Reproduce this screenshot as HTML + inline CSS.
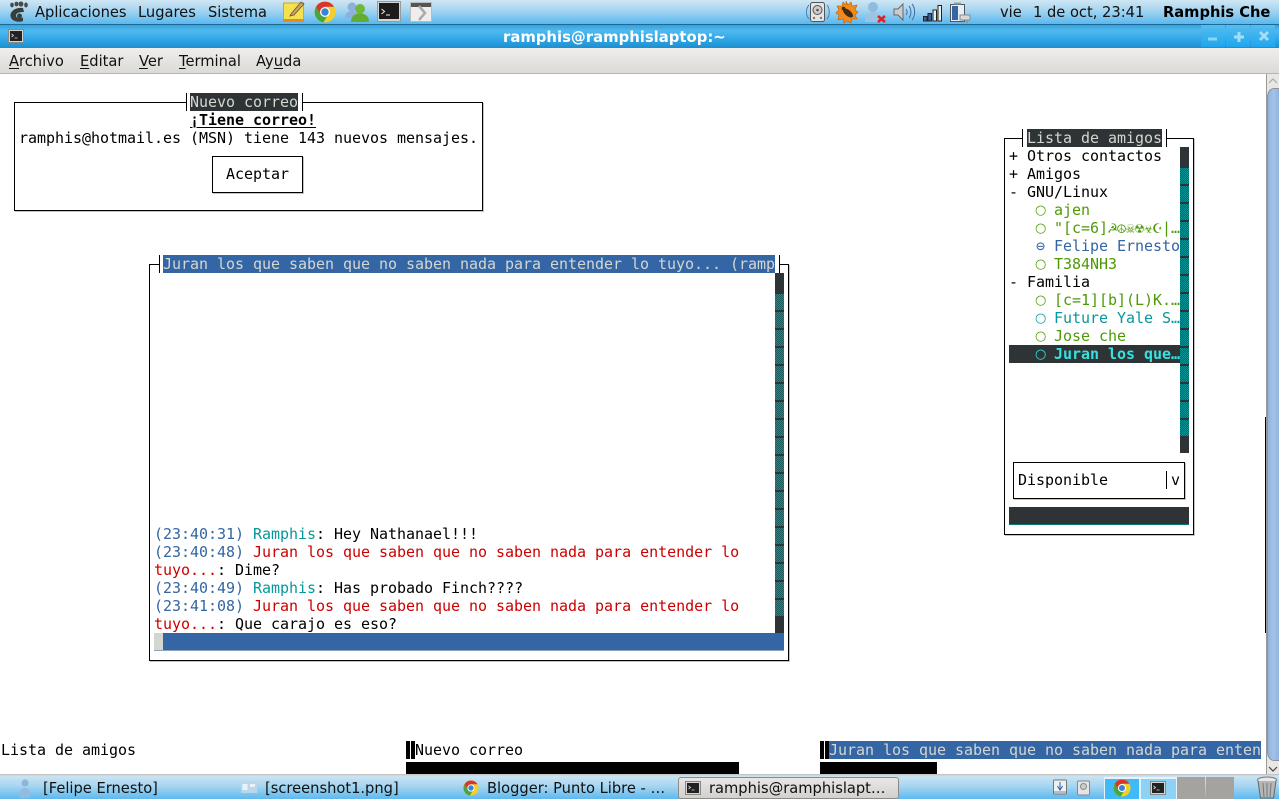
<!DOCTYPE html>
<html><head><meta charset="utf-8"><style>
html,body{margin:0;padding:0;width:1279px;height:799px;overflow:hidden;background:#fff}
div,span.a,svg.a{position:absolute}
.t{position:absolute;font-family:"DejaVu Sans Mono","Liberation Mono",monospace;font-size:15px;letter-spacing:-.03px;line-height:18px;height:18px;white-space:pre;color:#000}
.s{position:absolute;font-family:"DejaVu Sans","Liberation Sans",sans-serif;font-size:14.67px;line-height:18px;white-space:pre;color:#111}
.b{border:1px solid #000;box-sizing:border-box;box-shadow:1px 1px 0 #c4c4c4}
.o{display:inline-block;width:9px;font-family:"DejaVu Sans",sans-serif;font-size:13px;line-height:18px;margin-left:-1px;margin-right:1px;font-weight:normal;position:relative;top:-1px}
u{text-decoration-thickness:1px;text-underline-offset:2px}
.dk{background:#2e3436}
.bl{background:#3465a4}
.g{color:#4e9a06}.c{color:#06989a}.r{color:#cc0000}.n{color:#3465a4}
</style></head><body>

<!-- top panel -->
<div style="left:0;top:0;width:1279px;height:24px;background:linear-gradient(180deg,#cfe6f3 0,#a9d6f0 40%,#5ab8ef 100%)"></div>
<div style="left:0;top:24px;width:1279px;height:1px;background:#1c6a98"></div>
<svg class="a" style="left:8px;top:1px" width="20" height="22" viewBox="0 0 20 22"><g fill="#4a4a48"><ellipse cx="4" cy="4" rx="1.8" ry="2.4"/><ellipse cx="8.5" cy="3" rx="2" ry="2.4"/><ellipse cx="13" cy="3" rx="2.4" ry="2.6"/><ellipse cx="18" cy="4" rx="1.8" ry="2.5"/></g><path d="M15 7C8 6 2 10 2.500 15 3 20 10 22 15 20L15 16.500C11 18 8 17 8 14.500 8 11.500 12 11 16 11Z" fill="#3c3c3a"/><circle cx="11.500" cy="15" r="2.500" fill="#3c3c3a"/></svg>
<span class="s" style="left:35px;top:4px">Aplicaciones</span>
<span class="s" style="left:138px;top:4px">Lugares</span>
<span class="s" style="left:208px;top:4px">Sistema</span>
<!-- note -->
<svg class="a" style="left:283px;top:1px" width="23" height="22" viewBox="0 0 23 22"><rect x=".5" y="2" width="20" height="17" fill="#f5e04d" stroke="#d9a520"/><rect x="0" y="18" width="21" height="3" fill="#e98b1c"/><path d="M8 13L18 1l3 2-10 11-4 1z" fill="#c8a268" stroke="#6d5230" stroke-width=".8"/></svg>
<!-- chrome -->
<svg class="a" style="left:314px;top:1px" width="22" height="22" viewBox="0 0 22 22"><circle cx="11" cy="11" r="10.500" fill="#f3cf2c"/><path d="M2 5.800A10.500 10.500 0 0 1 20.100 5.800H11L6.800 13.500Z" fill="#d9352d"/><path d="M2 5.800A10.500 10.500 0 0 0 9.500 21.400L14 13.600 6.800 13.500Z" fill="#4aa63c"/><circle cx="11" cy="11" r="5" fill="#fff"/><circle cx="11" cy="11" r="3.700" fill="#3c82d8"/></svg>
<!-- users -->
<svg class="a" style="left:345px;top:1px" width="25" height="22" viewBox="0 0 25 22"><circle cx="7" cy="6" r="4.500" fill="#8fb0d8"/><path d="M0 17c0-5 3-7 7-7s6 3 6 7z" fill="#8fb0d8"/><circle cx="15" cy="8" r="5" fill="#6fb83a"/><path d="M6 21c0-6 4-8.500 9-8.500s9 2.500 9 8.500z" fill="#62ad2f"/></svg>
<!-- terminal -->
<svg class="a" style="left:377px;top:1px" width="25" height="22" viewBox="0 0 25 22"><rect x=".5" y=".5" width="23" height="20" fill="#d5d5d3" stroke="#999"/><rect x="2" y="2" width="20" height="16" fill="#1c1c1c"/><path d="M4.500 8l3 2.500-3 2.500M9 14h4" stroke="#eee" fill="none"/></svg>
<!-- arrow box -->
<svg class="a" style="left:410px;top:2px" width="23" height="21" viewBox="0 0 23 21"><rect x=".5" y=".5" width="21" height="19" fill="#eee" stroke="#bbb"/><rect x="1" y="1" width="20" height="4" fill="#555"/><path d="M9 4l6 7-6 7" stroke="#aaa" stroke-width="2.500" fill="none"/></svg>
<!-- tray -->
<svg class="a" style="left:806px;top:1px" width="24" height="22" viewBox="0 0 24 22"><rect x="4.500" y="1.500" width="14" height="19" rx="2" fill="#e4e4e2" stroke="#555"/><circle cx="11.500" cy="9" r="4.500" fill="#ccc" stroke="#555"/><circle cx="11.500" cy="9" r="1.300" fill="#555"/><circle cx="8" cy="17" r="1.200" fill="#777"/><circle cx="15" cy="17" r="1.200" fill="#777"/><path d="M3 4C-.5 8-.5 14 3 18M21 4c3 4 3 10 0 14" stroke="#4a7fb8" fill="none"/></svg>
<svg class="a" style="left:835px;top:0" width="24" height="24" viewBox="0 0 24 24"><path d="M11 1l2 4 3-3 1 4 5-1-2 5 3 2-3 3 2 4-5 0-1 4-4-2-3 2-1-4-5 1 1-5-3-2 3-3-2-4 5 0 1-4 3 3z" fill="#f08a1c" stroke="#b8620e" stroke-width=".6"/><ellipse cx="13" cy="13" rx="6" ry="3" transform="rotate(40 13 13)" fill="#3f2c16"/><circle cx="8.500" cy="8.500" r="1.800" fill="#3f2c16"/></svg>
<svg class="a" style="left:864px;top:1px" width="24" height="23" viewBox="0 0 24 23"><circle cx="9" cy="6" r="5" fill="#8fbbe0"/><path d="M1 21c0-7 3-10 8-10s8 3 8 10z" fill="#9cc3e4"/><path d="M14 15l7 6M21 15l-7 6" stroke="#dd2222" stroke-width="2.500"/></svg>
<svg class="a" style="left:893px;top:2px" width="23" height="20" viewBox="0 0 23 20"><path d="M1 7h4l5-5v16l-5-5H1z" fill="#ccc" stroke="#666"/><path d="M13 7c1.500 2 1.500 4 0 6M16 4c2.500 3 2.500 9 0 12M19 2c3.500 4 3.500 12 0 16" stroke="#3d6fa8" fill="none"/></svg>
<svg class="a" style="left:923px;top:4px" width="20" height="18" viewBox="0 0 20 18"><rect x=".5" y="12.500" width="3.500" height="4.500" fill="#3465a4" stroke="#222"/><rect x="5" y="9.500" width="3.500" height="7.500" fill="#3465a4" stroke="#222"/><rect x="10" y="6" width="3.500" height="11" fill="#eee" stroke="#222"/><rect x="15" y="1.500" width="3.500" height="15.500" fill="#eee" stroke="#222"/></svg>
<svg class="a" style="left:949px;top:1px" width="23" height="23" viewBox="0 0 23 23"><rect x="1.500" y="3.500" width="14" height="17" fill="#e8eef6" stroke="#555"/><rect x="3" y="5" width="6" height="14" fill="#3465a4"/><rect x="5" y="1.500" width="7" height="2" fill="#999"/><path d="M11 14h10v5H11z M14 19v3M18 19v3" fill="#d8d8d6" stroke="#888"/></svg>
<span class="s" style="left:1000px;top:4px">vie</span>
<span class="s" style="left:1033px;top:4px">1 de oct, 23:41</span>
<span class="s" style="left:1163px;top:4px;font-weight:bold;color:#000">Ramphis Che</span>

<!-- titlebar -->
<div style="left:0;top:25px;width:1279px;height:23px;background:linear-gradient(180deg,#3a9fd8 0,#4fbaf0 25%,#2fa4e4 65%,#1b8fcf 100%)"></div>
<svg class="a" style="left:8px;top:29px" width="16" height="14" viewBox="0 0 16 14"><rect x=".5" y=".5" width="15" height="13" fill="#d5d5d3" stroke="#888"/><rect x="2" y="2" width="12" height="10" fill="#222"/><path d="M3.500 5l2 1.500-2 1.500M6.500 9h3" stroke="#ddd" fill="none" stroke-width=".8"/></svg>
<span class="s" style="left:503px;top:28px;font-weight:bold;color:#fff;font-size:14.85px">ramphis@ramphislaptop:~</span>
<div style="left:1201px;top:25px;width:24px;height:22px;background:linear-gradient(180deg,#55bdf0,#1ea6ee)"></div>
<div style="left:1226px;top:25px;width:24px;height:22px;background:linear-gradient(180deg,#55bdf0,#1ea6ee)"></div>
<div style="left:1251px;top:25px;width:24px;height:22px;background:linear-gradient(180deg,#55bdf0,#1ea6ee)"></div>
<svg class="a" style="left:1201px;top:25px" width="75" height="22" viewBox="0 0 75 22"><path d="M7 14h9" stroke="#8fd3f5" stroke-width="3"/><path d="M33 12h10M38 7v10" stroke="#a5dcf7" stroke-width="3"/><path d="M59 7l8 8M67 7l-8 8" stroke="#a5dcf7" stroke-width="3"/></svg>

<!-- menu bar -->
<div style="left:0;top:48px;width:1279px;height:25px;background:linear-gradient(180deg,#efeeec,#dbdad7)"></div>
<div style="left:0;top:73px;width:1279px;height:1px;background:#b8b7b4"></div>
<span class="s" style="left:9px;top:53px"><u>A</u>rchivo</span>
<span class="s" style="left:80px;top:53px"><u>E</u>ditar</span>
<span class="s" style="left:139px;top:53px"><u>V</u>er</span>
<span class="s" style="left:179px;top:53px"><u>T</u>erminal</span>
<span class="s" style="left:256px;top:53px">Ay<u>u</u>da</span>

<!-- mail box -->
<div class="b" style="left:14px;top:102px;width:469px;height:109px"></div>
<div style="left:186px;top:93px;width:117px;height:18px;background:#fff"></div>
<div style="left:186px;top:93px;width:1px;height:18px;background:#000"></div>
<div style="left:302px;top:93px;width:1px;height:18px;background:#000"></div>
<div class="dk" style="left:190px;top:93px;width:108px;height:18px"></div>
<span class="t" style="left:190px;top:93px;color:#d3d7cf">Nuevo correo</span>
<span class="t" style="left:190px;top:111px;font-weight:bold"><u>¡Tiene correo!</u></span>
<span class="t" style="left:19px;top:129px">ramphis@hotmail.es (MSN) tiene 143 nuevos mensajes.</span>
<div class="b" style="left:212px;top:156px;width:91px;height:37px"></div>
<span class="t" style="left:226px;top:165px">Aceptar</span>

<!-- chat -->
<div class="b" style="left:149px;top:264px;width:640px;height:397px"></div>
<div style="left:159px;top:255px;width:620px;height:18px;background:#fff"></div>
<div style="left:159px;top:255px;width:1px;height:18px;background:#000"></div>
<div style="left:779px;top:255px;width:1px;height:18px;background:#000"></div>
<div class="bl" style="left:163px;top:255px;width:612px;height:18px"></div>
<span class="t" style="left:163px;top:255px;color:#d3d7cf">Juran los que saben que no saben nada para entender lo tuyo... (ramp</span>
<div class="dk" style="left:775px;top:273px;width:9px;height:360px"></div>
<svg class="a" style="left:775px;top:294px" width="9" height="322" viewBox="0 0 9 322" shape-rendering="crispEdges" fill="none" stroke-width="1"><rect width="9" height="322" fill="#1a5c5e"/><g stroke="#0a9497" stroke-dasharray="1 1"><path d="M.5 0V322"/><path d="M1.500 1V322"/><path d="M2.500 0V322"/><path d="M3.500 1V322"/><path d="M4.500 0V322"/><path d="M5.500 1V322"/><path d="M6.500 0V322"/><path d="M7.500 1V322"/><path d="M8.500 0V322"/></g><path d="M4.500 0V322" stroke="#2e3436" stroke-width="9" stroke-dasharray="2 16" stroke-dashoffset="2"/></svg>
<span class="t" style="left:154px;top:525px"><span class="n">(23:40:31)</span> <span class="c">Ramphis</span>: Hey Nathanael!!!</span>
<span class="t" style="left:154px;top:543px"><span class="n">(23:40:48)</span> <span class="r">Juran los que saben que no saben nada para entender lo</span></span>
<span class="t" style="left:154px;top:561px"><span class="r">tuyo...</span>: Dime?</span>
<span class="t" style="left:154px;top:579px"><span class="n">(23:40:49)</span> <span class="c">Ramphis</span>: Has probado Finch????</span>
<span class="t" style="left:154px;top:597px"><span class="n">(23:41:08)</span> <span class="r">Juran los que saben que no saben nada para entender lo</span></span>
<span class="t" style="left:154px;top:615px"><span class="r">tuyo...</span>: Que carajo es eso?</span>
<div class="bl" style="left:154px;top:633px;width:630px;height:17px"></div>
<div style="left:154px;top:633px;width:9px;height:17px;background:#d3d7cf"></div>
<div style="left:154px;top:650px;width:630px;height:1px;background:#8fa3bd"></div>

<!-- buddy list -->
<div class="b" style="left:1004px;top:138px;width:190px;height:397px"></div>
<div style="left:1022px;top:129px;width:145px;height:18px;background:#fff"></div>
<div style="left:1022px;top:129px;width:1px;height:18px;background:#000"></div>
<div style="left:1166px;top:129px;width:1px;height:18px;background:#000"></div>
<div class="dk" style="left:1027px;top:129px;width:135px;height:18px"></div>
<span class="t" style="left:1027px;top:129px;color:#d3d7cf">Lista de amigos</span>
<span class="t" style="left:1009px;top:147px">+ Otros contactos</span>
<span class="t" style="left:1009px;top:165px">+ Amigos</span>
<span class="t" style="left:1009px;top:183px">- GNU/Linux</span>
<span class="t g" style="left:1036px;top:201px"><span class="o">○</span> ajen</span>
<span class="t g" style="left:1036px;top:219px"><span class="o">○</span> "[c=6]☭☮☠☢☣☪|…</span>
<span class="t n" style="left:1036px;top:237px">⊖ Felipe Ernesto</span>
<span class="t g" style="left:1036px;top:255px"><span class="o">○</span> T384NH3</span>
<span class="t" style="left:1009px;top:273px">- Familia</span>
<span class="t g" style="left:1036px;top:291px"><span class="o">○</span> [c=1][b](L)K.…</span>
<span class="t c" style="left:1036px;top:309px"><span class="o">○</span> Future Yale S…</span>
<span class="t g" style="left:1036px;top:327px"><span class="o">○</span> Jose che</span>
<div class="dk" style="left:1009px;top:345px;width:171px;height:18px"></div>
<span class="t" style="left:1036px;top:345px;color:#34e2e2"><span class="o">○</span> <b>Juran los que…</b></span>
<div class="dk" style="left:1180px;top:147px;width:9px;height:306px"></div>
<svg class="a" style="left:1180px;top:168px" width="9" height="268" viewBox="0 0 9 268" shape-rendering="crispEdges" fill="none" stroke-width="1"><rect width="9" height="268" fill="#1a5c5e"/><g stroke="#0a9497" stroke-dasharray="1 1"><path d="M.5 0V268"/><path d="M1.500 1V268"/><path d="M2.500 0V268"/><path d="M3.500 1V268"/><path d="M4.500 0V268"/><path d="M5.500 1V268"/><path d="M6.500 0V268"/><path d="M7.500 1V268"/><path d="M8.500 0V268"/></g><path d="M4.500 0V268" stroke="#2e3436" stroke-width="9" stroke-dasharray="2 16" stroke-dashoffset="2"/></svg>
<div class="b" style="left:1013px;top:462px;width:172px;height:37px"></div>
<div style="left:1166px;top:471px;width:1px;height:18px;background:#000"></div>
<span class="t" style="left:1018px;top:471px">Disponible</span>
<span class="t" style="left:1171px;top:471px">v</span>
<div class="dk" style="left:1009px;top:507px;width:180px;height:17px"></div>
<div style="left:1009px;top:524px;width:180px;height:1px;background:#06787a"></div>

<!-- bottom status -->
<span class="t" style="left:1px;top:741px">Lista de amigos</span>
<div style="left:406px;top:741px;width:4px;height:18px;background:#000"></div>
<div style="left:411px;top:741px;width:4px;height:18px;background:#000"></div>
<span class="t" style="left:415px;top:741px">Nuevo correo</span>
<div style="left:820px;top:741px;width:4px;height:18px;background:#000"></div>
<div style="left:825px;top:741px;width:4px;height:18px;background:#000"></div>
<div class="bl" style="left:829px;top:741px;width:432px;height:18px"></div>
<span class="t" style="left:829px;top:741px;color:#d3d7cf">Juran los que saben que no saben nada para enten</span>
<div style="left:406px;top:762px;width:333px;height:14px;background:#000"></div>
<div style="left:820px;top:762px;width:117px;height:14px;background:#000"></div>
<div style="left:1265px;top:417px;width:1px;height:216px;background:#000"></div>

<!-- scrollbar -->
<div style="left:1266px;top:74px;width:13px;height:702px;background:#e8e7e5;border-left:1px solid #999;box-sizing:border-box"></div>
<div style="left:1267px;top:88px;width:12px;height:673px;background:linear-gradient(90deg,#8fb3df,#a5c2e6 50%,#8fb3df);border:1px solid #8d9199;border-right:0;box-sizing:border-box;border-radius:7px 0 0 7px / 9px 0 0 9px"></div>
<svg class="a" style="left:1267px;top:75px" width="12" height="12" viewBox="0 0 12 12"><path d="M2 8l4-4 4 4" stroke="#aaa" stroke-width="1.200" fill="none"/></svg>
<svg class="a" style="left:1267px;top:763px" width="12" height="12" viewBox="0 0 12 12"><path d="M2 4l4 4 4-4" stroke="#444" stroke-width="1.200" fill="none"/></svg>

<!-- taskbar -->
<div style="left:0;top:774px;width:1279px;height:2px;background:linear-gradient(180deg,#bbb,#ddd)"></div>
<div style="left:0;top:776px;width:1279px;height:23px;background:linear-gradient(180deg,#cbe4f3 0,#a5d5f1 45%,#5db9ef 100%)"></div>
<svg class="a" style="left:14px;top:778px" width="20" height="20" viewBox="0 0 20 20"><circle cx="11" cy="5" r="3.500" fill="#8cb6dc"/><path d="M6 20c0-7 1-10 5-10s5 3 5 10z" fill="#93bbdf"/></svg>
<span class="s" style="left:43px;top:780px">[Felipe Ernesto]</span>
<svg class="a" style="left:241px;top:781px" width="16" height="12" viewBox="0 0 16 12"><rect width="16" height="12" fill="#b9d6ea"/><rect x="1.500" y="3" width="5" height="6" fill="#e8f2f8"/><rect x="9" y="3" width="5" height="3" fill="#e8f2f8"/></svg>
<span class="s" style="left:265px;top:780px">[screenshot1.png]</span>
<svg class="a" style="left:463px;top:780px" width="16" height="16" viewBox="0 0 22 22"><circle cx="11" cy="11" r="10.500" fill="#f3cf2c"/><path d="M2 5.800A10.500 10.500 0 0 1 20.100 5.800H11L6.800 13.500Z" fill="#d9352d"/><path d="M2 5.800A10.500 10.500 0 0 0 9.500 21.400L14 13.600 6.800 13.500Z" fill="#4aa63c"/><circle cx="11" cy="11" r="5" fill="#fff"/><circle cx="11" cy="11" r="3.700" fill="#3c82d8"/></svg>
<span class="s" style="left:487px;top:780px">Blogger: Punto Libre - …</span>
<div style="left:678px;top:777px;width:221px;height:22px;box-sizing:border-box;background:linear-gradient(180deg,#e8e7e5,#d2d1ce);border:1px solid #8c8b88;border-radius:3px"></div>
<svg class="a" style="left:685px;top:781px" width="16" height="14" viewBox="0 0 16 14"><rect x=".5" y=".5" width="15" height="13" fill="#d5d5d3" stroke="#888"/><rect x="2" y="2" width="12" height="10" fill="#222"/><path d="M3.500 5l2 1.500-2 1.500M6.500 9h3" stroke="#ddd" fill="none" stroke-width=".8"/></svg>
<span class="s" style="left:709px;top:780px">ramphis@ramphislapt…</span>
<svg class="a" style="left:1052px;top:779px" width="17" height="17" viewBox="0 0 17 17"><rect x="1.500" y="1" width="13" height="14" rx="1" fill="#eef0f2" stroke="#777"/><path d="M8 3v8M5.500 7L8 11l2.500-4" stroke="#2b62a8" fill="none"/><rect x="2" y="12" width="12" height="2" fill="#bbb"/></svg>
<svg class="a" style="left:1076px;top:780px" width="16" height="16" viewBox="0 0 16 16"><rect x="1.500" y="1" width="12" height="14" rx="1" fill="#e4e4e2" stroke="#888"/><circle cx="7.500" cy="6.500" r="3" fill="#ccc" stroke="#888"/></svg>
<div style="left:1104px;top:777px;width:36px;height:22px;background:#3dbaf7;border-top:2px solid #e6f3fa;box-sizing:border-box;border-left:1px solid #e6f3fa;border-right:1px solid #e6f3fa"></div>
<svg class="a" style="left:1113px;top:779px" width="18" height="18" viewBox="0 0 22 22"><circle cx="11" cy="11" r="10.500" fill="#f3cf2c"/><path d="M2 5.800A10.500 10.500 0 0 1 20.100 5.800H11L6.800 13.500Z" fill="#d9352d"/><path d="M2 5.800A10.500 10.500 0 0 0 9.500 21.400L14 13.600 6.800 13.500Z" fill="#4aa63c"/><circle cx="11" cy="11" r="5" fill="#fff"/><circle cx="11" cy="11" r="3.700" fill="#3c82d8"/></svg>
<div style="left:1140px;top:777px;width:37px;height:22px;background:#8bd2f6;border-top:2px solid #e6f3fa;box-sizing:border-box;border-left:1px solid #e6f3fa;border-right:1px solid #e6f3fa"></div>
<svg class="a" style="left:1150px;top:781px" width="16" height="14" viewBox="0 0 16 14"><rect x=".5" y=".5" width="15" height="13" fill="#d5d5d3" stroke="#888"/><rect x="2" y="2" width="12" height="10" fill="#222"/><path d="M3.500 5l2 1.500-2 1.500M6.500 9h3" stroke="#ddd" fill="none" stroke-width=".8"/></svg>
<div style="left:1177px;top:777px;width:28px;height:22px;background:#a5a3a0"></div>
<div style="left:1206px;top:777px;width:28px;height:22px;background:#a5a3a0"></div>
<svg class="a" style="left:1255px;top:776px" width="24" height="23" viewBox="0 0 24 23"><ellipse cx="12" cy="4" rx="9.500" ry="3" fill="#e8e8e8" stroke="#777"/><path d="M3 5l2.500 17h13L21 5" fill="#b5b7b7" stroke="#666"/><path d="M8 7l1 14M12 7v14M16 7l-1 14" stroke="#777" fill="none"/></svg>
</body></html>
